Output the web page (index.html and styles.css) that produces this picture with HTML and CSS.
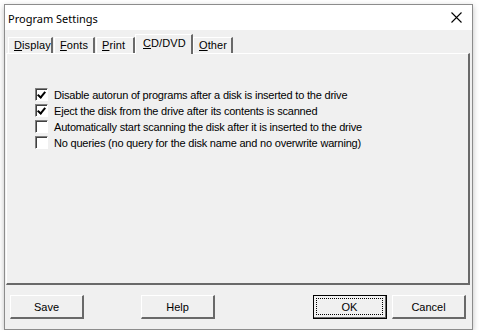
FILE: index.html
```html
<!DOCTYPE html>
<html lang="en">

<head>
    <meta charset="UTF-8">
    <title>Program Settings</title>
    <link rel="stylesheet" href="styles.css">
</head>

<body>
    <div class="window">
        <div class="titlebar">
            <span class="title">Program Settings</span>
            <span class="close">
                <svg width="11" height="11" viewBox="0 0 11 11"><path d="M0.5 0.5 L10.5 10.5 M10.5 0.5 L0.5 10.5" stroke="#000" stroke-width="1.1" fill="none"/></svg>
            </span>
        </div>

        <div class="tabs">
            <div class="tab tab-display"><u>D</u>isplay</div>
            <div class="tab tab-fonts"><u>F</u>onts</div>
            <div class="tab tab-print"><u>P</u>rint</div>
            <div class="tab tab-cd active"><u>C</u>D/DVD</div>
            <div class="tab tab-other"><u>O</u>ther</div>
        </div>

        <div class="panel">
            <label class="check-row"><span class="box checked"></span>Disable autorun of programs after a disk is inserted to the drive</label>
            <label class="check-row"><span class="box checked"></span>Eject the disk from the drive after its contents is scanned</label>
            <label class="check-row"><span class="box"></span>Automatically start scanning the disk after it is inserted to the drive</label>
            <label class="check-row"><span class="box"></span>No queries (no query for the disk name and no overwrite warning)</label>
        </div>

        <div class="footer">
            <div class="btn-group">
                <button class="btn">Save</button>
                <button class="btn">Help</button>
            </div>
            <div class="btn-group right">
                <button class="btn default"><span class="focus">OK</span></button>
                <button class="btn">Cancel</button>
            </div>
        </div>
    </div>
</body>

</html>
```

FILE: styles.css
```css
body {
    margin: 0;
    padding: 0;
    background: #fff;
    font-family: 'Liberation Sans', Arial, sans-serif;
    font-size: 11px;
    color: #000;
}

.window {
    margin: 4px 0 0 4px;
    width: 467px;
    height: 324px;
    border: 1px solid #8c8c8c;
    background: #f0f0f0;
    box-shadow: 0 2px 6px rgba(0, 0, 0, 0.25);
    display: flex;
    flex-direction: column;
}

.titlebar {
    height: 25px;
    background: #fff;
    display: flex;
    align-items: center;
    justify-content: space-between;
    padding: 0 10px 0 3px;
}

.title {
    font-family: 'Noto Sans', sans-serif;
    font-size: 11px;
    padding-top: 1px;
}

.close {
    display: flex;
}

.tabs {
    display: flex;
    align-items: flex-end;
    height: 23px;
    padding: 0 0 0 3px;
}

.tab {
    box-sizing: border-box;
    height: 16px;
    line-height: 15px;
    padding: 0 0 0 5px;
    border-top: 1px solid #fff;
    border-left: 1px solid #fff;
    border-right: 2px solid #696969;
    margin-right: 1px;
    font-size: 11px;
    letter-spacing: 0.1px;
}

.tab-display {
    width: 45px;
}

.tab-fonts {
    width: 41px;
}

.tab-print {
    width: 39px;
}

.tab-cd {
    width: 58px;
}

.tab-other {
    width: 40px;
}

.tab.active {
    height: 20px;
    line-height: 16px;
    padding-left: 7px;
    margin: 0 0 -1px -1px;
    background: #f0f0f0;
    position: relative;
    z-index: 1;
}

.panel {
    margin: 0 2px 0 1px;
    height: 232px;
    border-top: 1px solid #fff;
    border-left: 1px solid #fff;
    border-right: 2px solid #696969;
    border-bottom: 2px solid #696969;
    padding: 34px 0 0 28px;
    box-sizing: border-box;
    display: flex;
    flex-direction: column;
    gap: 3px;
}

.check-row {
    display: flex;
    align-items: center;
    height: 13px;
    font-size: 11px;
    letter-spacing: -0.2px;
}

.box {
    width: 11px;
    height: 11px;
    margin-right: 6px;
    border-top: 1px solid #808080;
    border-left: 1px solid #808080;
    border-right: 1px solid #fff;
    border-bottom: 1px solid #fff;
    background: #fff;
    box-shadow: inset 1px 1px 0 #404040;
    position: relative;
}

.box.checked::after {
    content: '';
    position: absolute;
    left: 3px;
    top: 1px;
    width: 3px;
    height: 6px;
    border-right: 2px solid #000;
    border-bottom: 2px solid #000;
    transform: rotate(40deg);
}

.footer {
    display: flex;
    justify-content: space-between;
    padding: 10px 6px 0 5px;
}

.btn-group {
    display: flex;
    gap: 57px;
}

.btn-group.right {
    gap: 5px;
}

.btn {
    width: 74px;
    height: 24px;
    padding: 0;
    background: #f0f0f0;
    border-top: 1px solid #fff;
    border-left: 1px solid #fff;
    border-right: 2px solid #696969;
    border-bottom: 2px solid #696969;
    font-family: 'Liberation Sans', Arial, sans-serif;
    font-size: 11px;
    color: #000;
}

.btn.default {
    outline: 1px solid #000;
    outline-offset: -1px;
    display: flex;
    align-items: center;
    justify-content: center;
    padding: 2px;
}

.focus {
    display: block;
    width: 100%;
    height: 100%;
    line-height: 16px;
    border: 1px dotted #000;
    box-sizing: border-box;
}
```
